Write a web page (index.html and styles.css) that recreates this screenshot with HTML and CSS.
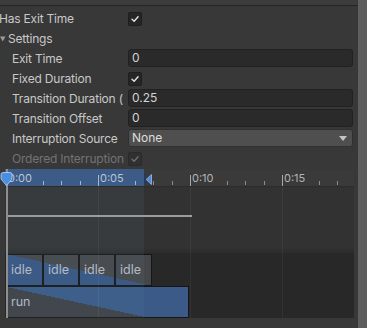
FILE: index.html
```html
<!DOCTYPE html>
<html lang="en">
<head>
    <meta charset="UTF-8">
    <title>Transition Inspector</title>
    <link rel="stylesheet" href="styles.css">
</head>
<body>
    <div class="window">
        <div class="inspector">
            <div class="topbar"></div>

            <div class="row">
                <span class="label flush">Has Exit Time</span>
                <span class="check"><svg viewBox="0 0 14 14"><path d="M3.5 7.2 L6 9.6 L10.6 4.4" /></svg></span>
            </div>
            <div class="row">
                <span class="label foldout"><svg class="tri" viewBox="0 0 6 6"><path d="M0 0.5 H5.5 L2.75 5.5 Z" /></svg>Settings</span>
            </div>
            <div class="row">
                <span class="label">Exit Time</span>
                <span class="field">0</span>
            </div>
            <div class="row">
                <span class="label">Fixed Duration</span>
                <span class="check"><svg viewBox="0 0 14 14"><path d="M3.5 7.2 L6 9.6 L10.6 4.4" /></svg></span>
            </div>
            <div class="row">
                <span class="label">Transition Duration (</span>
                <span class="field">0.25</span>
            </div>
            <div class="row">
                <span class="label">Transition Offset</span>
                <span class="field">0</span>
            </div>
            <div class="row">
                <span class="label">Interruption Source</span>
                <span class="dropdown">None<svg viewBox="0 0 8 5"><path d="M0 0 H8 L4 5 Z" /></svg></span>
            </div>
            <div class="row disabled">
                <span class="label">Ordered Interruption</span>
                <span class="check"><svg viewBox="0 0 14 14"><path d="M3.5 7.2 L6 9.6 L10.6 4.4" /></svg></span>
            </div>

            <div class="timeline">
                <div class="ruler" id="ruler">
                    <svg class="start-marker" viewBox="0 0 13 15">
                        <path d="M1 2.5 Q1 0.5 3 0.5 H10 Q12 0.5 12 2.5 V7 L6.5 13.5 L1 7 Z" />
                    </svg>
                    <svg class="end-marker" viewBox="0 0 8 11">
                        <rect x="0" y="0" width="1.6" height="11" />
                        <path d="M7.5 0.5 V10.5 L2.2 5.5 Z" />
                    </svg>
                </div>
                <div class="body" id="body">
                    <div class="track"><div class="curve"></div></div>
                    <div class="clips">
                        <div class="idle-row">
                            <div class="clip wide">idle</div>
                            <div class="clip">idle</div>
                            <div class="clip">idle</div>
                            <div class="clip wide">idle</div>
                        </div>
                        <div class="clip run">run</div>
                    </div>
                    <div class="selection"></div>
                    <div class="playhead"></div>
                </div>
            </div>
        </div>
        <div class="scrollbar"></div>
    </div>

    <script>
        // 18.4px por segundo, el cero esta 1px dentro de la linea de tiempo
        const pxPerSecond = 18.4;
        const origin = 1;
        const selectionEnd = 139;

        const ruler = document.getElementById('ruler');
        const body = document.getElementById('body');

        for (let s = 0; s <= 18; s++) {
            const x = origin + s * pxPerSecond;
            const inSel = x < selectionEnd ? ' in-sel' : '';

            if (s % 5 === 0) {
                const tick = document.createElement('div');
                tick.className = 'tick major' + inSel;
                tick.style.left = x + 'px';
                ruler.appendChild(tick);

                const label = document.createElement('div');
                label.className = 'tick-label' + inSel;
                label.style.left = (x + 2) + 'px';
                label.textContent = '0:' + String(s).padStart(2, '0');
                ruler.appendChild(label);

                if (s > 0) {
                    const grid = document.createElement('div');
                    grid.className = 'grid-line';
                    grid.style.left = Math.round(x) + 'px';
                    body.appendChild(grid);
                }
            } else if (s % 5 !== 1) {
                const tick = document.createElement('div');
                tick.className = 'tick minor' + inSel;
                tick.style.left = x + 'px';
                ruler.appendChild(tick);
            }
        }
    </script>
</body>
</html>
```

FILE: styles.css
```css
* {
    margin: 0;
    padding: 0;
    box-sizing: border-box;
}

body {
    background-color: #383838;
    font-family: Inter, "Noto Sans", sans-serif;
    font-size: 12px;
    color: #c8c8c8;
    overflow: hidden;
}

.window {
    display: flex;
    width: 367px;
    height: 328px;
}

.inspector {
    width: 358px;
    background: #383838;
}

.scrollbar {
    width: 9px;
    background: #5e5e5e;
}

.topbar {
    height: 6px;
    background: #3c3c3c;
    border-bottom: 1px solid #242424;
    margin-bottom: 2px;
}

.row {
    display: flex;
    align-items: center;
    height: 20px;
}

.label {
    width: 128px;
    padding-left: 12px;
    white-space: nowrap;
    overflow: hidden;
    flex-shrink: 0;
    letter-spacing: -0.2px;
}

.label.flush {
    padding-left: 0;
    text-indent: -1px;
}

.label.foldout {
    display: flex;
    align-items: center;
    padding-left: 0;
}

.tri {
    width: 6px;
    height: 6px;
    margin-right: 2px;
    margin-top: 1px;
}

.tri path {
    fill: #9a9a9a;
}

.check {
    width: 14px;
    height: 14px;
    background: #262626;
    border: 1px solid #1e1e1e;
    border-radius: 2px;
    margin-top: 1px;
}

.check svg {
    display: block;
    width: 12px;
    height: 12px;
}

.check path {
    fill: none;
    stroke: #e6e6e6;
    stroke-width: 1.6;
    stroke-linecap: round;
    stroke-linejoin: round;
}

.disabled .label {
    color: #737373;
}

.disabled .check {
    background: #303030;
    border-color: #2a2a2a;
}

.disabled .check path {
    stroke: #6e6e6e;
}

.field,
.dropdown {
    width: 225px;
    height: 18px;
    line-height: 16px;
    padding-left: 3px;
    border-radius: 3px;
    color: #d4d4d4;
}

.field {
    background: #2a2a2a;
    border: 1px solid #212121;
}

.dropdown {
    display: flex;
    justify-content: space-between;
    align-items: center;
    background: #4f4f4f;
    border: 1px solid #303030;
    padding-right: 5px;
    color: #dedede;
}

.dropdown svg {
    width: 8px;
    height: 5px;
}

.dropdown path {
    fill: #c4c4c4;
}

/* linea de tiempo */
.timeline {
    margin: 1px 0 0 5px;
    width: 349px;
}

.ruler {
    position: relative;
    height: 18px;
    background: linear-gradient(to right, #3c5b87 139px, #3a3a3a 139px);
    border-bottom: 1px solid #2c2c2c;
}

.tick {
    position: absolute;
    width: 1px;
    background: #8c8c8c;
}

.tick.major {
    top: 6px;
    height: 11px;
    background: #a8a8a8;
}

.tick.minor {
    top: 12px;
    height: 4px;
}

.tick.in-sel {
    background: #a4b6d0;
}

.tick-label {
    position: absolute;
    top: 3px;
    font-size: 11px;
    line-height: 13px;
    color: #b4b4b4;
}

.tick-label.in-sel {
    color: #b9c6d8;
}

.start-marker {
    position: absolute;
    left: -5px;
    top: 3px;
    width: 13px;
    height: 15px;
    z-index: 2;
}

.start-marker path {
    fill: #4a8ee2;
    stroke: #bcd6f6;
    stroke-width: 0.8;
}

.end-marker {
    position: absolute;
    left: 139px;
    top: 5px;
    width: 8px;
    height: 11px;
}

.end-marker rect {
    fill: #1f3b66;
}

.end-marker path {
    fill: #4a8ee2;
    stroke: #bcd6f6;
    stroke-width: 0.6;
}

.body {
    position: relative;
    height: 131px;
}

.track {
    height: 66px;
    background: linear-gradient(to bottom, #323232 60px, #2c2c2c 66px);
    padding-top: 28px;
}

.curve {
    margin-left: 1px;
    width: 186px;
    height: 2px;
    background: #9c9c9c;
}

.clips {
    height: 65px;
    background: #282828;
    padding-top: 1px;
}

.grid-line {
    position: absolute;
    top: 0;
    bottom: 0;
    width: 1px;
    background: rgba(255, 255, 255, 0.05);
}

.idle-row {
    display: flex;
    margin-left: 1px;
    width: 146px;
    height: 32px;
    background: linear-gradient(to top right, #36547f 50%, #444648 50%);
}

.clip {
    width: 36px;
    height: 32px;
    line-height: 30px;
    padding-left: 4px;
    border: 1px solid #161616;
    color: #b8bcc4;
    font-size: 12.5px;
}

.clip.wide {
    width: 37px;
}

.clip.run {
    margin-left: 1px;
    width: 183px;
    background:
        linear-gradient(to top right, #3d3f43 50%, #3a5986 50%) 0 0 / 138px 100% no-repeat,
        #3b5a88;
}

.selection {
    position: absolute;
    left: 1px;
    top: 0;
    width: 138px;
    height: 131px;
    background: rgba(130, 160, 210, 0.08);
    pointer-events: none;
}

.playhead {
    position: absolute;
    left: 1px;
    top: -18px;
    bottom: 0;
    width: 2px;
    background: #8e8e8e;
}
```
